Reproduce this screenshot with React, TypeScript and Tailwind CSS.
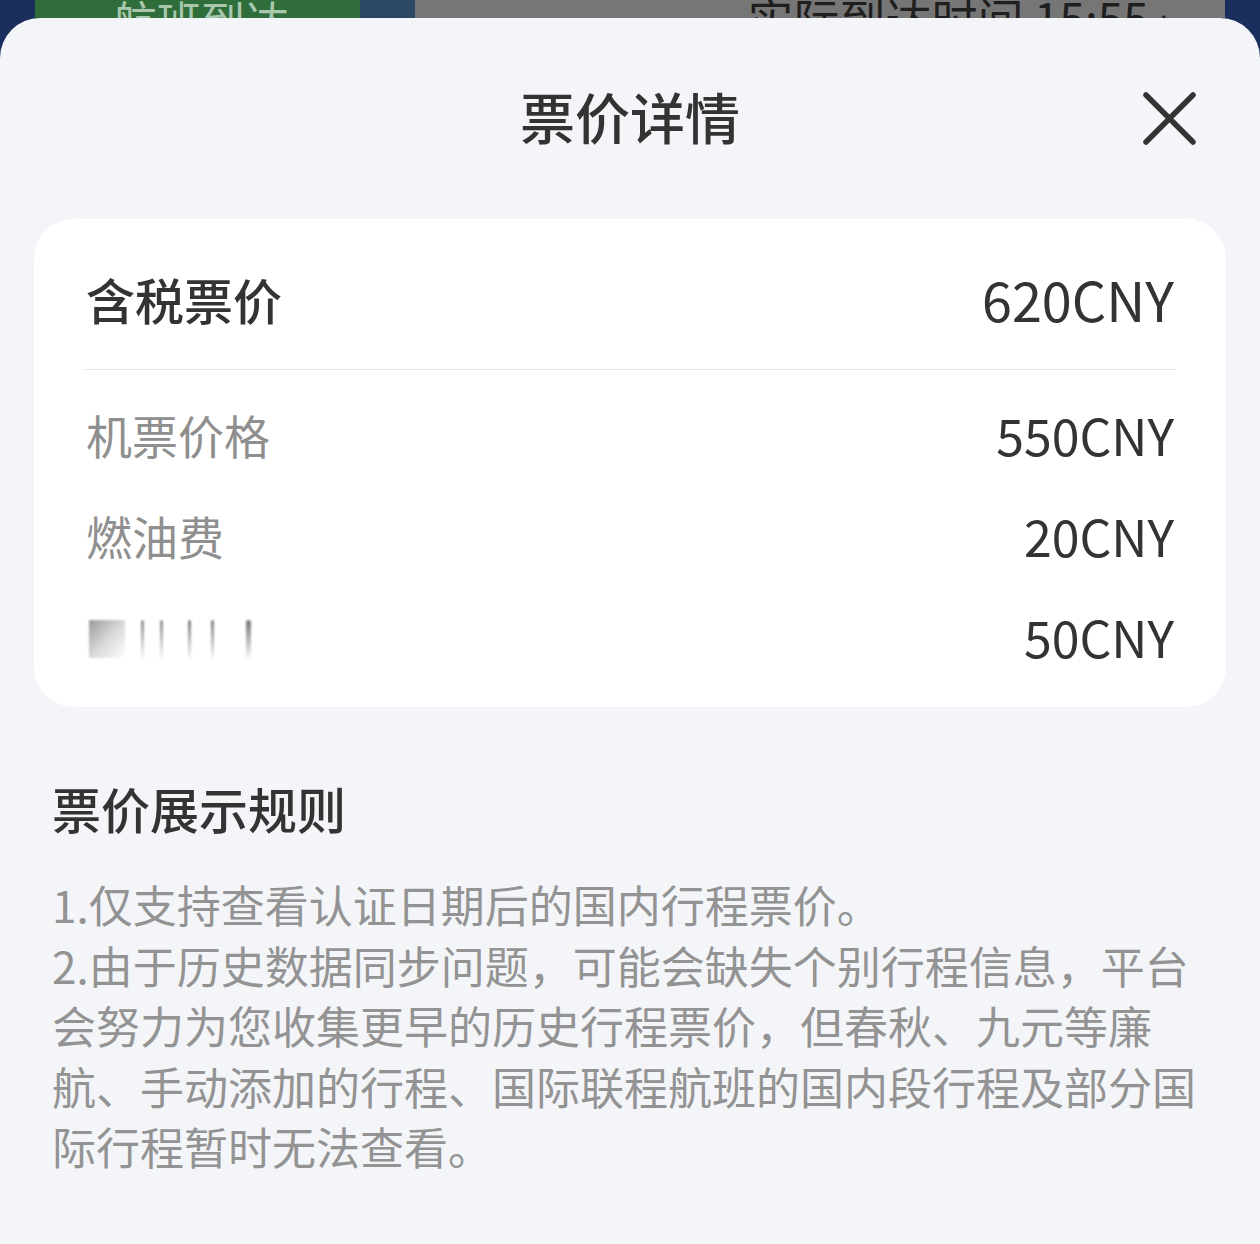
import React from "react";

const font = { fontFamily: '"Noto Sans CJK SC", "Noto Sans", sans-serif' };

const rows = [
  { label: "机票价格", value: "550CNY" },
  { label: "燃油费", value: "20CNY" },
];

// blurred label in the screenshot (redacted), drawn as soft bars
function BlurredLabel() {
  return (
    <div className="flex items-start h-[40px] blur-[1px]">
      <div className="w-[36px] h-[38px] bg-gradient-to-br from-[#9a9a9a] via-[#d8d8d8] to-white" />
      <div className="ml-[16px] w-[3px] h-[40px] bg-gradient-to-b from-[#8a8a8a] to-white rounded-t" />
      <div className="ml-[16px] w-[3px] h-[40px] bg-gradient-to-b from-[#8a8a8a] to-white rounded-t" />
      <div className="ml-[25px] w-[3px] h-[40px] bg-gradient-to-b from-[#7a7a7a] to-white rounded-t" />
      <div className="ml-[20px] w-[3px] h-[40px] bg-gradient-to-b from-[#7a7a7a] to-white rounded-t" />
      <div className="ml-[32px] w-[5px] h-[40px] bg-gradient-to-b from-[#777] to-white rounded-t-full" />
    </div>
  );
}

export default function App() {
  return (
    <div className="w-[1260px] h-[1244px] bg-[#1b2f5e] overflow-hidden" style={font}>
      {/* dimmed page behind the sheet */}
      <div className="h-[18px] mx-[35px] flex bg-[#767676] overflow-hidden">
        <div className="w-[325px] bg-[#2f6e3a] flex items-end overflow-hidden">
          <span className="ml-[78px] text-[44px] leading-none text-[#a9c7ad] translate-y-[24px]">航班到达</span>
        </div>
        <div className="w-[55px] bg-[#2b4866]" />
        <div className="flex-1 flex justify-end items-end overflow-hidden pr-[52px]">
          <span className="text-[46px] leading-none text-[#1f1f1f] translate-y-[22px]">实际到达时间 15:55 ›</span>
        </div>
      </div>

      <div className="h-[1226px] bg-[#f4f5f9] rounded-t-[40px]">
        {/* header */}
        <div className="relative h-[201px] flex items-center justify-center pb-[6px]">
          <h1 className="text-[55px] font-medium text-[#333] leading-none">票价详情</h1>
          <button className="absolute right-[64px] top-[73px] w-[54px] h-[54px] flex items-center justify-center">
            <svg width="54" height="54" viewBox="0 0 54 54" fill="none">
              <path d="M4 4L51 51M51 4L4 51" stroke="#333" strokeWidth="5.5" strokeLinecap="round" />
            </svg>
          </button>
        </div>

        {/* price card */}
        <div className="mx-[34px] bg-white rounded-[40px] px-[50px]">
          <div className="flex items-center justify-between pt-[50px] pb-[40px]">
            <span className="text-[49px] font-medium text-[#333] leading-[60px] ml-[2px]">含税票价</span>
            <span className="text-[54px] text-[#333] leading-[60px] mr-[2px]">620CNY</span>
          </div>
          <div className="h-px bg-[#e6e6e6]" />
          <div className="pt-[13px] pb-[21px]">
            {rows.map((r) => (
              <div key={r.label} className="h-[101px] flex items-center justify-between">
                <span className="text-[46px] text-[#8f8f8f] leading-none ml-[2px]">{r.label}</span>
                <span className="text-[50px] text-[#333] leading-none mr-[2px]">{r.value}</span>
              </div>
            ))}
            <div className="h-[101px] flex items-center justify-between">
              <div className="ml-[5px] mt-[8px]">
                <BlurredLabel />
              </div>
              <span className="text-[50px] text-[#333] leading-none mr-[2px]">50CNY</span>
            </div>
          </div>
        </div>

        {/* rules */}
        <div className="px-[52px] pt-[71px]">
          <h2 className="text-[49px] font-medium text-[#333] leading-[60px]">票价展示规则</h2>
          <div className="mt-[36px] text-[44px] leading-[60.5px] text-[#939393]">
            <p>1.仅支持查看认证日期后的国内行程票价。</p>
            <p>
              2.由于历史数据同步问题，可能会缺失个别行程信息，平台会努力为您收集更早的历史行程票价，但春秋、九元等廉航、手动添加的行程、国际联程航班的国内段行程及部分国际行程暂时无法查看。
            </p>
          </div>
        </div>
      </div>
    </div>
  );
}
